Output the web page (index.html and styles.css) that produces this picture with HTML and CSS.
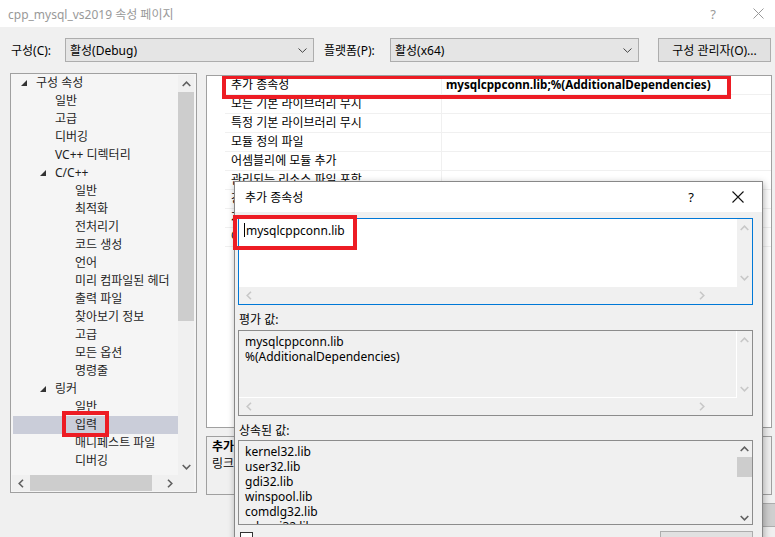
FILE: index.html
```html
<!DOCTYPE html>
<html lang="ko">
<head>
	<meta charset="utf-8">
	<title>cpp_mysql_vs2019 속성 페이지</title>
	<link rel="stylesheet" href="styles.css">
</head>
<body>
	<div class="titlebar">
		<span class="title">cpp_mysql_vs2019 속성 페이지</span>
		<span class="tbHelp">?</span>
		<span class="tbClose">
			<svg width="11" height="11" viewBox="0 0 11 11"><path d="M0.5 0.5 L10.5 10.5 M10.5 0.5 L0.5 10.5" stroke="#999" stroke-width="1" fill="none"/></svg>
		</span>
	</div>

	<div class="toolbar">
		<span class="lbl lblConf">구성(C):</span>
		<div class="combo">
			<span>활성(Debug)</span>
			<svg width="9" height="5" viewBox="0 0 9 5"><path d="M0.5 0.5 L4.5 4.3 L8.5 0.5" stroke="#444" fill="none"/></svg>
		</div>
		<span class="lbl lblPlat">플랫폼(P):</span>
		<div class="combo">
			<span>활성(x64)</span>
			<svg width="9" height="5" viewBox="0 0 9 5"><path d="M0.5 0.5 L4.5 4.3 L8.5 0.5" stroke="#444" fill="none"/></svg>
		</div>
		<div class="btn btnConf">구성 관리자(O)...</div>
	</div>

	<div class="main">
		<div class="tree">
			<div class="treeTop">
				<div class="treeList">
					<div class="node l1 open">구성 속성</div>
					<div class="node l2">일반</div>
					<div class="node l2">고급</div>
					<div class="node l2">디버깅</div>
					<div class="node l2">VC++ 디렉터리</div>
					<div class="node l2 open">C/C++</div>
					<div class="node l3">일반</div>
					<div class="node l3">최적화</div>
					<div class="node l3">전처리기</div>
					<div class="node l3">코드 생성</div>
					<div class="node l3">언어</div>
					<div class="node l3">미리 컴파일된 헤더</div>
					<div class="node l3">출력 파일</div>
					<div class="node l3">찾아보기 정보</div>
					<div class="node l3">고급</div>
					<div class="node l3">모든 옵션</div>
					<div class="node l3">명령줄</div>
					<div class="node l2 open">링커</div>
					<div class="node l3">일반</div>
					<div class="node l3 sel"><span class="txt">입력<span class="mark markTree"></span></span></div>
					<div class="node l3">매니페스트 파일</div>
					<div class="node l3">디버깅</div>
				</div>
				<div class="vscroll">
					<div class="arrow">
						<svg width="9" height="6" viewBox="0 0 9 6"><path d="M0.7 5 L4.5 1.2 L8.3 5" stroke="#606060" stroke-width="1.6" fill="none"/></svg>
					</div>
					<div class="track">
						<div class="thumb thumbTree"></div>
					</div>
					<div class="arrow">
						<svg width="9" height="6" viewBox="0 0 9 6"><path d="M0.7 1 L4.5 4.8 L8.3 1" stroke="#606060" stroke-width="1.6" fill="none"/></svg>
					</div>
				</div>
			</div>
			<div class="hscroll">
				<div class="harrow">
					<svg width="6" height="9" viewBox="0 0 6 9"><path d="M5 0.7 L1.2 4.5 L5 8.3" stroke="#606060" stroke-width="1.6" fill="none"/></svg>
				</div>
				<div class="htrack">
					<div class="hthumb"></div>
				</div>
				<div class="harrow">
					<svg width="6" height="9" viewBox="0 0 6 9"><path d="M1 0.7 L4.8 4.5 L1 8.3" stroke="#606060" stroke-width="1.6" fill="none"/></svg>
				</div>
				<div class="corner"></div>
			</div>
		</div>

		<div class="right">
			<div class="grid">
				<div class="mark markGrid"></div>
				<div class="row">
					<div class="name">추가 종속성</div>
					<div class="value bold">mysqlcppconn.lib;%(AdditionalDependencies)</div>
				</div>
				<div class="row"><div class="name">모든 기본 라이브러리 무시</div><div class="value"></div></div>
				<div class="row"><div class="name">특정 기본 라이브러리 무시</div><div class="value"></div></div>
				<div class="row"><div class="name">모듈 정의 파일</div><div class="value"></div></div>
				<div class="row"><div class="name">어셈블리에 모듈 추가</div><div class="value"></div></div>
				<div class="row"><div class="name">관리되는 리소스 파일 포함</div><div class="value"></div></div>
				<div class="row"><div class="name">강제 기호 참조</div><div class="value"></div></div>
				<div class="row"><div class="name">지연 로드된 DLL</div><div class="value"></div></div>
				<div class="row"><div class="name">어셈블리 링크 리소스</div><div class="value"></div></div>
			</div>
			<div class="desc">
				<div class="bold">추가 종속성</div>
				<div>링크 명령줄에 추가할 추가 항목을 지정합니다.</div>
			</div>
		</div>
	</div>

	<div class="footer">
		<div class="btn btnFoot"></div>
	</div>

	<!-- 추가 종속성 대화 상자 -->
	<div class="dialog">
		<div class="dlgTitle">
			<span class="title">추가 종속성</span>
			<span class="dlgHelp">?</span>
			<span class="dlgClose">
				<svg width="12" height="12" viewBox="0 0 12 12"><path d="M0.5 0.5 L11.5 11.5 M11.5 0.5 L0.5 11.5" stroke="#111" stroke-width="1.1" fill="none"/></svg>
			</span>
		</div>
		<div class="dlgBody">
			<div class="mark markDlg"></div>
			<div class="box editBox">
				<div class="boxText"><span class="caret"></span>mysqlcppconn.lib</div>
				<div class="sbV">
					<svg width="9" height="6" viewBox="0 0 9 6"><path d="M0.7 5 L4.5 1.2 L8.3 5" stroke="#c8c8c8" stroke-width="1.6" fill="none"/></svg>
					<svg width="9" height="6" viewBox="0 0 9 6"><path d="M0.7 1 L4.5 4.8 L8.3 1" stroke="#c8c8c8" stroke-width="1.6" fill="none"/></svg>
				</div>
				<div class="sbH">
					<svg width="6" height="9" viewBox="0 0 6 9"><path d="M5 0.7 L1.2 4.5 L5 8.3" stroke="#c8c8c8" stroke-width="1.6" fill="none"/></svg>
					<svg width="6" height="9" viewBox="0 0 6 9"><path d="M1 0.7 L4.8 4.5 L1 8.3" stroke="#c8c8c8" stroke-width="1.6" fill="none"/></svg>
				</div>
				<div class="sbCorner"></div>
			</div>

			<div class="dlgLabel">평가 값:</div>
			<div class="box evalBox">
				<div class="boxText">mysqlcppconn.lib<br>%(AdditionalDependencies)</div>
				<div class="sbV">
					<svg width="9" height="6" viewBox="0 0 9 6"><path d="M0.7 5 L4.5 1.2 L8.3 5" stroke="#c8c8c8" stroke-width="1.6" fill="none"/></svg>
					<svg width="9" height="6" viewBox="0 0 9 6"><path d="M0.7 1 L4.5 4.8 L8.3 1" stroke="#c8c8c8" stroke-width="1.6" fill="none"/></svg>
				</div>
				<div class="sbH">
					<svg width="6" height="9" viewBox="0 0 6 9"><path d="M5 0.7 L1.2 4.5 L5 8.3" stroke="#c8c8c8" stroke-width="1.6" fill="none"/></svg>
					<svg width="6" height="9" viewBox="0 0 6 9"><path d="M1 0.7 L4.8 4.5 L1 8.3" stroke="#c8c8c8" stroke-width="1.6" fill="none"/></svg>
				</div>
				<div class="sbCorner"></div>
			</div>

			<div class="dlgLabel">상속된 값:</div>
			<div class="box inhBox">
				<div class="boxText">kernel32.lib<br>user32.lib<br>gdi32.lib<br>winspool.lib<br>comdlg32.lib<br>advapi32.lib</div>
				<div class="sbV">
					<svg width="9" height="6" viewBox="0 0 9 6"><path d="M0.7 5 L4.5 1.2 L8.3 5" stroke="#606060" stroke-width="1.6" fill="none"/></svg>
					<div class="inhTrack"><div class="inhThumb"></div></div>
					<svg width="9" height="6" viewBox="0 0 9 6"><path d="M0.7 1 L4.5 4.8 L8.3 1" stroke="#606060" stroke-width="1.6" fill="none"/></svg>
				</div>
			</div>

			<div class="dlgFoot">
				<span class="check"></span>
				<div class="btn btnMacro"></div>
			</div>
		</div>
	</div>
</body>
</html>
```

FILE: styles.css
```css
*, *:after, *:before {
	box-sizing: border-box;
}
html, body {
	margin: 0;
	padding: 0;
}
body {
	position: relative;
	width: 775px;
	height: 537px;
	overflow: hidden;
	background: #f0f0f0;
	font-family: "Noto Sans", "Noto Sans CJK KR", sans-serif;
	font-size: 12px;
	color: #000;
}
.bold {
	font-weight: bold;
}

/* title bar */
.titlebar {
	display: flex;
	align-items: center;
	height: 27px;
	padding: 0 6px 0 8px;
	background: #fff;
	color: #999;
}
.titlebar .title {
	flex: 1;
}
.tbHelp {
	width: 20px;
	margin-right: 24px;
	text-align: center;
	font-size: 13px;
}
.tbClose {
	width: 22px;
	display: flex;
	justify-content: center;
}

/* config row */
.toolbar {
	display: flex;
	align-items: center;
	height: 46px;
	padding-left: 11px;
}
.lblConf {
	width: 54px;
}
.lblPlat {
	width: 66px;
	margin-left: 10px;
}
.combo {
	display: flex;
	align-items: center;
	justify-content: space-between;
	width: 249px;
	height: 24px;
	padding: 0 6px 0 4px;
	background: #e5e5e5;
	border: 1px solid #adadad;
}
.btn {
	display: flex;
	align-items: center;
	justify-content: center;
	background: #e1e1e1;
	border: 1px solid #adadad;
}
.btnConf {
	width: 113px;
	height: 24px;
	margin-left: 19px;
}

/* main area */
.main {
	display: flex;
	align-items: flex-start;
	padding-left: 10px;
}
.tree {
	display: flex;
	flex-direction: column;
	width: 187px;
	height: 420px;
	padding: 0 2px 1px 1px;
	background: #f5f5f5;
	border: 1px solid #a0a0a0;
}
.treeTop {
	display: flex;
	height: 401px;
}
.treeList {
	flex: 1;
	overflow: hidden;
	white-space: nowrap;
}
.node {
	height: 18px;
	line-height: 18px;
	color: #1e1e1e;
}
.l1 {
	padding-left: 24px;
}
.l2 {
	padding-left: 43px;
}
.l3 {
	padding-left: 63px;
}
.open:before {
	content: "";
	display: inline-block;
	width: 0;
	height: 0;
	margin-left: -15px;
	margin-right: 9px;
	border-style: solid;
	border-width: 0 0 6px 6px;
	border-color: transparent transparent #333 transparent;
	vertical-align: 1px;
}
.sel {
	margin-left: 1px;
	padding-left: 62px;
	background: #cacdd9;
}
.txt {
	position: relative;
}
.vscroll {
	display: flex;
	flex-direction: column;
	width: 16px;
	margin-top: 1px;
	background: #f0f0f0;
}
.arrow {
	display: flex;
	align-items: center;
	justify-content: center;
	height: 17px;
}
.track {
	flex: 1;
}
.thumbTree {
	height: 229px;
	background: #cdcdcd;
}
.hscroll {
	display: flex;
	height: 16px;
	background: #f0f0f0;
}
.harrow {
	display: flex;
	align-items: center;
	justify-content: center;
	width: 17px;
}
.htrack {
	flex: 1;
	display: flex;
	align-items: stretch;
}
.hthumb {
	width: 122px;
	margin-left: 1px;
	background: #cdcdcd;
}
.corner {
	width: 16px;
	background: #f0f0f0;
}

/* property grid */
.right {
	margin-left: 9px;
	width: 566px;
}
.grid {
	position: relative;
	height: 353px;
	margin-top: 2px;
	padding-left: 18px;
	background: #fff;
	border: 1px solid #a0a0a0;
	overflow: hidden;
}
.row {
	display: flex;
	height: 19px;
	line-height: 18px;
	border-bottom: 1px solid #f0f0f0;
	white-space: nowrap;
}
.name {
	width: 217px;
	padding-left: 6px;
	border-right: 1px solid #f0f0f0;
}
.value {
	flex: 1;
	padding-left: 4px;
}
.value.bold {
	font-size: 11.65px;
}
.desc {
	height: 59px;
	margin-top: 8px;
	padding: 1px 5px;
	line-height: 17px;
	border: 1px solid #a0a0a0;
	white-space: nowrap;
	overflow: hidden;
}
.footer {
	display: flex;
	justify-content: flex-end;
	padding-top: 8px;
}
.btnFoot {
	width: 75px;
	height: 24px;
	margin-right: -61px;
	background: #cfcfcf;
}

/* red highlight boxes */
.mark {
	position: absolute;
	border: 4px solid #ed1c24;
}
.markTree {
	left: -13px;
	top: -5px;
	width: 47px;
	height: 26px;
}
.markGrid {
	left: 15px;
	top: -1px;
	width: 509px;
	height: 24px;
}
.markDlg {
	left: -2px;
	top: 3px;
	width: 124px;
	height: 35px;
}

/* dialog */
.dialog {
	position: absolute;
	left: 234px;
	top: 181px;
	width: 529px;
	height: 380px;
	background: #f0f0f0;
	border: 1px solid #888;
	box-shadow: 1px 2px 7px rgba(0, 0, 0, 0.3);
}
.dlgTitle {
	display: flex;
	align-items: center;
	height: 30px;
	padding: 0 12px 0 10px;
	background: #fff;
}
.dlgTitle .title {
	flex: 1;
}
.dlgHelp {
	width: 20px;
	margin-right: 25px;
	text-align: center;
	font-size: 13px;
}
.dlgClose {
	width: 24px;
	display: flex;
	justify-content: center;
}
.dlgBody {
	position: relative;
	padding: 6px 9px 0 3px;
}
.box {
	display: grid;
	grid-template-columns: 1fr 15px;
	grid-template-rows: 1fr 17px;
	width: 515px;
	border: 1px solid #8c8c8c;
	line-height: 15px;
}
.boxText {
	padding: 4px 6px;
	overflow: hidden;
	white-space: nowrap;
}
.sbV {
	display: flex;
	flex-direction: column;
	align-items: center;
	justify-content: space-between;
	padding: 6px 0;
	background: #f0f0f0;
}
.sbH {
	display: flex;
	align-items: center;
	justify-content: space-between;
	padding: 0 32px 0 7px;
	background: #f0f0f0;
}
.sbCorner {
	background: #f0f0f0;
}
.editBox {
	height: 87px;
	border-color: #0078d7;
}
.editBox .boxText {
	background: #fff;
	padding-left: 5px;
}
.caret {
	display: inline-block;
	width: 1px;
	height: 14px;
	margin-right: 1px;
	background: #000;
	vertical-align: -2px;
}
.evalBox {
	height: 86px;
}
.evalBox .boxText {
	padding-top: 3px;
	border-right: 1px solid #fff;
	border-bottom: 1px solid #fff;
}
.dlgLabel {
	height: 16px;
	line-height: 16px;
	margin: 7px 0 2px 1px;
}
.inhBox {
	height: 85px;
	grid-template-rows: 1fr;
	margin-top: -1px;
}
.inhBox .boxText {
	padding-top: 3px;
}
.inhBox .sbV {
	padding: 5px 0 3px;
}
.inhTrack {
	flex: 1;
	width: 15px;
	padding-top: 5px;
}
.inhThumb {
	height: 20px;
	background: #cdcdcd;
}
.dlgFoot {
	display: flex;
	justify-content: space-between;
	align-items: flex-start;
	width: 515px;
	margin-top: 6px;
}
.check {
	width: 13px;
	height: 13px;
	margin: 1px 0 0 2px;
	border: 1px solid #333;
	background: #fff;
}
.btnMacro {
	width: 93px;
	height: 23px;
}
```
